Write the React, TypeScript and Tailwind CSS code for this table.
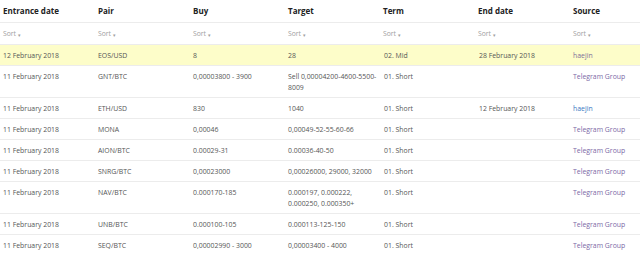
const columns = ["Entrance date", "Pair", "Buy", "Target", "Term", "End date", "Source"];

type Row = {
  date: string;
  pair: string;
  buy: string;
  target: string;
  term: string;
  end: string;
  source: string;
  link?: "visited" | "blue";
  highlight?: boolean;
};

const rows: Row[] = [
  { date: "12 February 2018", pair: "EOS/USD", buy: "8", target: "28", term: "02. Mid", end: "28 February 2018", source: "haejin", link: "visited", highlight: true },
  { date: "11 February 2018", pair: "GNT/BTC", buy: "0,00003800 - 3900", target: "Sell 0,00004200-4600-5500-8009", term: "01. Short", end: "", source: "Telegram Group" },
  { date: "11 February 2018", pair: "ETH/USD", buy: "830", target: "1040", term: "01. Short", end: "12 February 2018", source: "haejin", link: "blue" },
  { date: "11 February 2018", pair: "MONA", buy: "0,00046", target: "0,00049-52-55-60-66", term: "01. Short", end: "", source: "Telegram Group" },
  { date: "11 February 2018", pair: "AION/BTC", buy: "0.00029-31", target: "0.00036-40-50", term: "01. Short", end: "", source: "Telegram Group" },
  { date: "11 February 2018", pair: "SNRG/BTC", buy: "0,00023000", target: "0,00026000, 29000, 32000", term: "01. Short", end: "", source: "Telegram Group" },
  { date: "11 February 2018", pair: "NAV/BTC", buy: "0.000170-185", target: "0.000197, 0.000222, 0.000250, 0.000350+", term: "01. Short", end: "", source: "Telegram Group" },
  { date: "11 February 2018", pair: "UNB/BTC", buy: "0.000100-105", target: "0.000113-125-150", term: "01. Short", end: "", source: "Telegram Group" },
  { date: "11 February 2018", pair: "SEQ/BTC", buy: "0,00002990 - 3000", target: "0,00003400 - 4000", term: "01. Short", end: "", source: "Telegram Group" },
];

const cell = "px-[3px] pt-[5px] pb-[4px] align-top text-[#555]";

function SortCell() {
  return (
    <td className="px-[3px] pt-[5px] pb-[4px] align-top text-[6.8px] leading-[11px] text-[#a0a0a0]">
      Sort<span className="ml-[2px] relative top-[1px] text-[5px]">&#9662;</span>
    </td>
  );
}

export default function App() {
  return (
    <div className="w-[640px] h-[254px] overflow-hidden bg-white font-['Open_Sans',sans-serif]">
      <table className="w-full table-fixed border-collapse">
        <colgroup>
          <col className="w-[95px]" />
          <col className="w-[95px]" />
          <col className="w-[95px]" />
          <col className="w-[95px]" />
          <col className="w-[95px]" />
          <col className="w-[95px]" />
          <col />
        </colgroup>
        <thead>
          <tr className="h-[22px]">
            {columns.map((c) => (
              <th key={c} className="px-[3px] text-left align-middle text-[8px] font-bold text-[#222]">
                {c}
              </th>
            ))}
          </tr>
          <tr className="border-t border-[#ececec]">
            {columns.map((c) => (
              <SortCell key={c} />
            ))}
          </tr>
        </thead>
        <tbody className="text-[6.9px] leading-[11px]">
          {rows.map((r, i) => (
            <tr key={i} className={`border-t border-[#ececec] ${r.highlight ? "bg-[#fdfdc9]" : ""}`}>
              <td className={cell}>{r.date}</td>
              <td className={cell}>{r.pair}</td>
              <td className={cell}>{r.buy}</td>
              <td className={cell}>{r.target}</td>
              <td className={`${cell} pl-[4px]`}>{r.term}</td>
              <td className={`${cell} pl-[4px]`}>{r.end}</td>
              <td
                className={`px-[3px] pt-[5px] pb-[4px] align-top ${
                  r.link === "blue" ? "text-[#3a78c2]" : r.link === "visited" ? "text-[#7e6f99]" : "text-[#7c6aa6]"
                }`}
              >
                {r.source}
              </td>
            </tr>
          ))}
        </tbody>
      </table>
    </div>
  );
}
